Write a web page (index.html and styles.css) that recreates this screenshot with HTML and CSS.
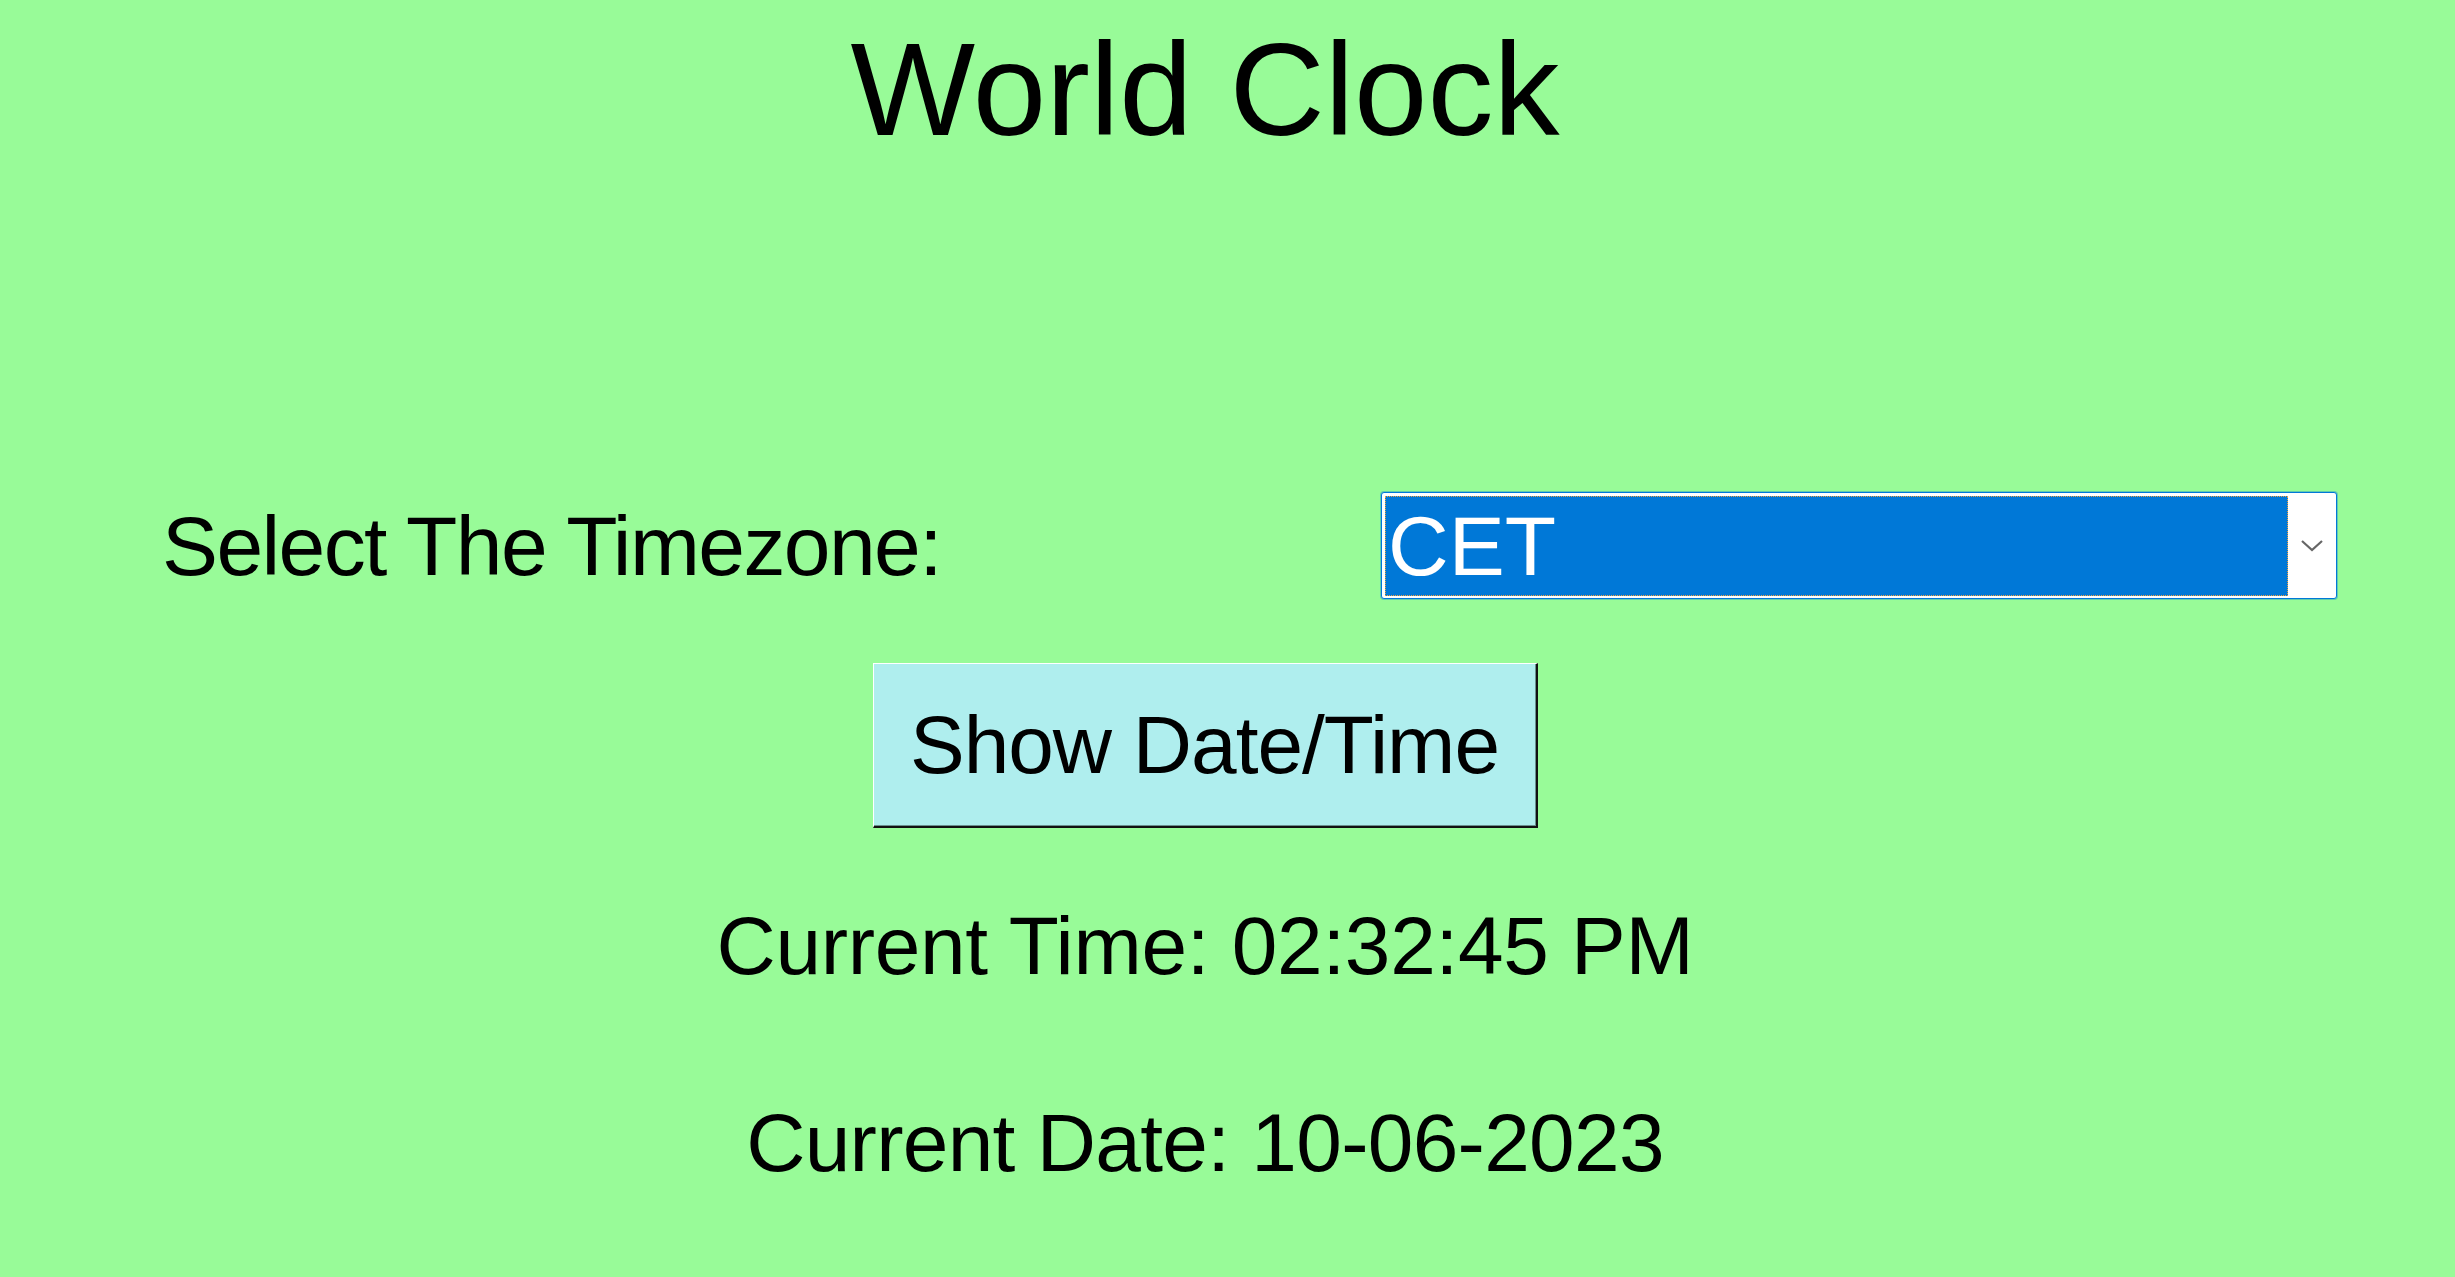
FILE: index.html
```html
<!DOCTYPE html>
<html lang="en">
<head>
<meta charset="utf-8">
<title>World Clock</title>
<link rel="stylesheet" href="styles.css">
</head>
<body>
<main class="app">
  <h1 class="title">World Clock</h1>
  <div class="tz-row">
    <label class="tz-label" for="tz">Select The Timezone:</label>
    <div class="combo" id="tz" role="combobox" aria-expanded="false" tabindex="0">
      <div class="combo-field"><span class="combo-text">CET</span></div>
      <div class="combo-arrow">
        <svg width="24" height="14" viewBox="0 0 24 14" aria-hidden="true">
          <path d="M2 2 L12 11 L22 2" fill="none" stroke="#666" stroke-width="2.2"/>
        </svg>
      </div>
    </div>
  </div>
  <button class="show-btn" type="button">Show Date/Time</button>
  <p class="result result-time">Current Time: 02:32:45 PM</p>
  <p class="result result-date">Current Date: 10-06-2023</p>
</main>
</body>
</html>
```
FILE: styles.css
```css
html, body {
  margin: 0;
  padding: 0;
}

body {
  background: #98fb98;
  font-family: "Liberation Sans", Arial, sans-serif;
  color: #000;
  min-height: 1277px;
}

.app {
  margin-left: 73px;
  width: 2264px;
  display: flex;
  flex-direction: column;
  align-items: center;
}

.title {
  margin: 0;
  padding-top: 24px;
  font-size: 132px;
  line-height: 132px;
  font-weight: normal;
}

.tz-row {
  margin-top: 336px;
  width: 100%;
  display: grid;
  grid-template-columns: 1308px 956px;
  align-items: start;
}

.tz-label {
  padding-left: 89px;
  padding-top: 1px;
  font-size: 84px;
  line-height: 107px;
  letter-spacing: -1.6px;
}

.combo {
  box-sizing: border-box;
  height: 107px;
  border: 1px solid #0078d7;
  border-radius: 3px;
  background: #fff;
  box-shadow: 0 0 0 1px rgba(0, 120, 215, 0.35);
  display: flex;
  padding: 3px 0 2px 3px;
}

.combo-field {
  flex: 1;
  box-sizing: border-box;
  background: #0078d7;
  border: 1px dotted #f0a040;
  display: flex;
  align-items: flex-start;
  padding-left: 2px;
}

.combo-text {
  color: #fff;
  font-size: 84px;
  line-height: 98px;
}

.combo-arrow {
  width: 48px;
  display: flex;
  align-items: center;
  justify-content: center;
}

.show-btn {
  margin-top: 63px;
  box-sizing: border-box;
  width: 665px;
  height: 165px;
  padding: 0;
  background: #afeeee;
  border-style: solid;
  border-width: 1px 2px 2px 1px;
  border-color: #fff #111 #111 #fff;
  box-shadow: inset -1px -1px 0 #6a8f8f;
  font-family: "Liberation Sans", Arial, sans-serif;
  font-size: 82px;
  line-height: 160px;
  color: #000;
  letter-spacing: -1px;
}

.result {
  margin: 0;
  font-size: 82px;
  line-height: 82px;
}

.result-time {
  margin-top: 77px;
  letter-spacing: -0.3px;
}

.result-date {
  margin-top: 115px;
  letter-spacing: -0.7px;
}
```
